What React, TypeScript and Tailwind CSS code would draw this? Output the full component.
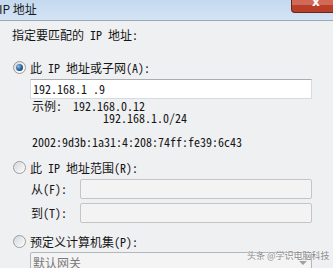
import React from "react";

const F = "font-['Noto_Sans_Mono_CJK_SC','Noto_Sans_CJK_SC',monospace]";

function Radio({ on }: { on?: boolean }) {
  return (
    <div className="w-[13px] h-[13px] rounded-full border border-[#9a9b9c] bg-[linear-gradient(135deg,#d2d4d6,#f4f5f6_60%,#ffffff)] flex items-center justify-center shrink-0">
      {on ? (
        <div className="w-[7px] h-[7px] rounded-full bg-[radial-gradient(circle_at_35%_35%,#8fc0ec,#2a5d93_55%,#0d2c52)]" />
      ) : (
        <div className="w-[9px] h-[9px] rounded-full bg-[linear-gradient(135deg,#d9dbdd,#f7f7f8)]" />
      )}
    </div>
  );
}

export default function App() {
  return (
    <div className={`w-[333px] h-[268px] overflow-hidden bg-[#eff0f2] text-[#151515] text-[12px] ${F} relative`}>
      {/* Title bar */}
      <div className="h-[21px] flex items-start border-b border-[#9aa8b8] bg-[linear-gradient(to_bottom,#c4d9ef,#d3e3f4)]">
        <div className="ml-[-1px] mt-[1px] leading-[16px] text-[12px] font-['Noto_Sans_CJK_SC',sans-serif] text-[#1b1b1b]">IP 地址</div>
        <div className="ml-auto w-[42px] h-[13px] shrink-0 rounded-bl-[4px] border-l border-b border-[#6e2419] bg-[#b93f2b] overflow-hidden relative">
          <div className="h-[5px] bg-[#d06a56]" />
          <span className="absolute left-[20px] top-[-3px] text-white text-[12px] leading-[10px] font-bold font-['DejaVu_Sans',sans-serif]">x</span>
        </div>
      </div>

      <div className="flex flex-col">
        <div className="ml-[12px] mt-[8px] leading-[12px] h-[12px]">指定要匹配的 IP 地址:</div>

        <div className="mt-[20px] ml-[13px] flex items-center h-[13px]">
          <Radio on />
          <span className="ml-[4px] leading-[12px]">此 IP 地址或子网(A):</span>
        </div>

        <div className="mt-[5px] ml-[30px] w-[282px] h-[20px] bg-white border border-[#d6dbe1] border-t-[#abadb3] flex items-center">
          <span className="ml-[2px] leading-[12px]">192.168.1 .9</span>
        </div>

        <div className="ml-[32px] mt-[1px] flex leading-[11px] h-[12px]">
          <span className="w-[41px]">示例:</span>
          <span>192.168.0.12</span>
        </div>
        <div className="ml-[103px] leading-[11px] h-[11px]">192.168.1.0/24</div>

        <div className="ml-[32px] mt-[13px] leading-[12px] h-[12px]">2002:9d3b:1a31:4:208:74ff:fe39:6c43</div>

        <div className="mt-[13px] ml-[13px] flex items-center h-[13px]">
          <Radio />
          <span className="ml-[4px] leading-[12px]">此 IP 地址范围(R):</span>
        </div>

        <div className="mt-[5px] ml-[31px] flex items-center h-[20px]">
          <span className="w-[49px] leading-[12px]">从(F):</span>
          <div className="w-[232px] h-[20px] rounded-[2px] border border-[#c3c5c8] bg-[#f3f3f4]" />
        </div>
        <div className="mt-[4px] ml-[31px] flex items-center h-[20px]">
          <span className="w-[49px] leading-[12px]">到(T):</span>
          <div className="w-[232px] h-[20px] rounded-[2px] border border-[#c3c5c8] bg-[#f3f3f4]" />
        </div>

        <div className="mt-[12px] ml-[13px] flex items-center h-[13px]">
          <Radio />
          <span className="ml-[4px] leading-[12px]">预定义计算机集(P):</span>
        </div>

        <div className="mt-[4px] ml-[30px] w-[282px] h-[20px] rounded-[2px] border border-[#b4b7ba] bg-[#f4f4f4] flex items-start relative">
          <span className="ml-[2px] mt-[4px] leading-[12px] text-[#7a7a7a]">默认网关</span>
          <div className="absolute right-[4px] top-[8px] w-0 h-0 border-l-[4px] border-r-[4px] border-t-[4px] border-l-transparent border-r-transparent border-t-[#a0a0a0]" />
        </div>
      </div>

      {/* watermark */}
      <div className="absolute left-[247px] top-[251px] text-[9px] leading-[10px] text-[#8a8a8a] font-['Noto_Sans_CJK_SC',sans-serif] [text-shadow:0_0_2px_#ffffff]">
        头条 @学识电脑科技
      </div>
    </div>
  );
}
